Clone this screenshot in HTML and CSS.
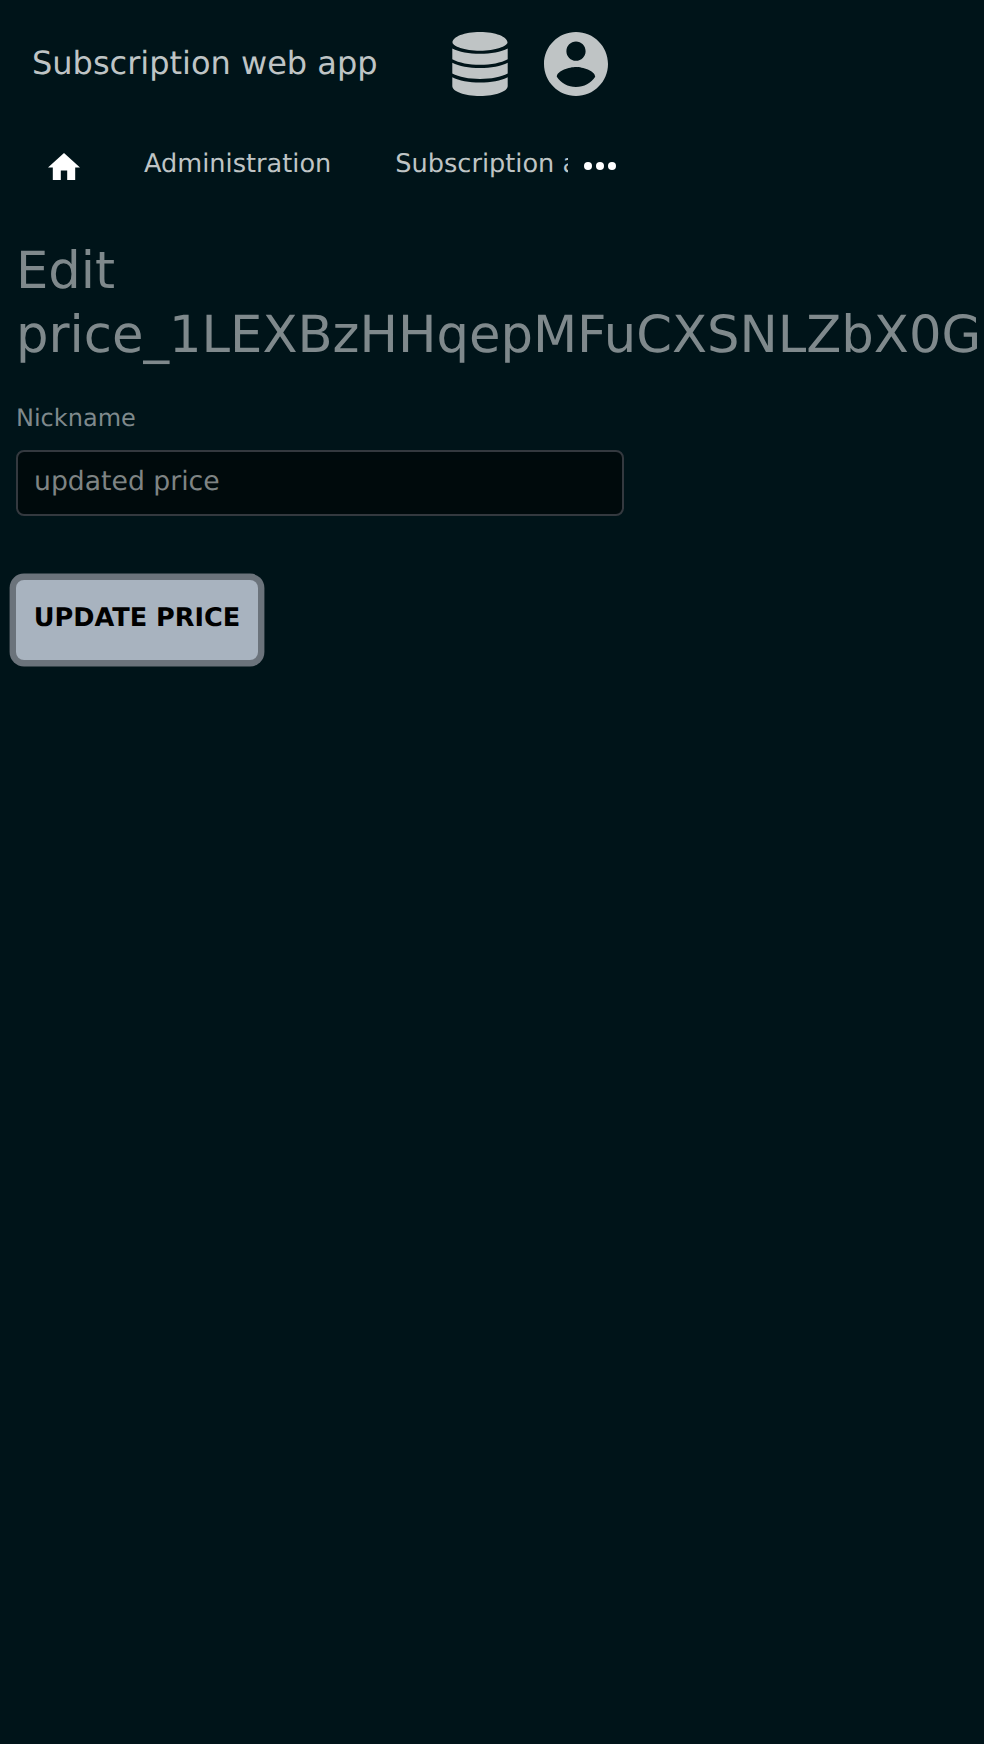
FILE: index.html
```html
<!DOCTYPE html>
<html lang="en">
<head>
<meta charset="utf-8">
<title>Subscription web app</title>
<link rel="stylesheet" href="styles.css">
</head>
<body>
<div class="page">
  <header class="header">
    <span class="brand">Subscription web app</span>
    <div class="actions">
      <svg class="database" viewBox="0 0 56 64"><path d="M28 0C43.500 0 55.500 4.700 55.500 10.500C55.500 14 43.500 18.700 28 18.700S.5 14 .5 10.500C.5 4.700 12.500 0 28 0ZM.3 16.500C7 20 17 21.800 28 21.800S49 20 55.700 16.500V27.300C49 31 39 32.800 28 32.800S7 31 .3 27.300ZM.3 30.800C7 34.300 17 36.100 28 36.100S49 34.300 55.700 30.800V41.600C49 45.200 39 47 28 47S7 45.200 .3 41.600ZM.3 45.200C7 48.700 17 50.500 28 50.500S49 48.700 55.700 45.200V54C55.700 59.500 43.500 64 28 64S.3 59.500 .3 54Z"/></svg>
      <svg class="account" viewBox="2 2 20 20"><path d="M12 2C6.480 2 2 6.480 2 12s4.480 10 10 10 10-4.480 10-10S17.520 2 12 2zm0 3c1.660 0 3 1.340 3 3s-1.340 3-3 3-3-1.340-3-3 1.340-3 3-3zm0 14.200c-2.500 0-4.710-1.280-6-3.220.030-1.990 4-3.080 6-3.080 1.990 0 5.970 1.090 6 3.080-1.290 1.940-3.500 3.220-6 3.220z"/></svg>
    </div>
  </header>
  <nav class="nav">
    <div class="links">
      <a class="home"><svg viewBox="2 3 20 17"><path d="M10 20v-6h4v6h5v-8h3L12 3 2 12h3v8z"/></svg></a>
      <a>Administration</a>
      <a>Subscription administration</a>
    </div>
    <svg class="more" viewBox="0 0 32 8"><circle cx="4" cy="4" r="4"/><circle cx="16" cy="4" r="4"/><circle cx="28" cy="4" r="4"/></svg>
  </nav>
  <main class="content">
    <h1>Edit price_1LEXBzHHqepMFuCXSNLZbX0G</h1>
    <form>
      <label for="nickname">Nickname</label>
      <input id="nickname" type="text" value="updated price">
      <button type="button">UPDATE PRICE</button>
    </form>
  </main>
</div>
</body>
</html>
```
FILE: styles.css
```css
* { box-sizing: border-box; }
html { background: #001419; overflow: hidden; }
body { margin: 0; min-height: 1744px; background: #001419; font-family: "DejaVu Sans", sans-serif; text-rendering: geometricPrecision; }
.page { width: 640px; }
.header { height: 128px; padding: 0 32px; display: flex; align-items: center; justify-content: space-between; color: #bfc4c5; }
.brand { padding-bottom: 2px; font-size: 32px; line-height: 48px; }
.actions { display: flex; align-items: center; gap: 36px; }
.actions svg { height: 64px; fill: #bfc4c5; }
.database { width: 56px; }
.account { width: 64px; }
.nav { height: 72px; display: flex; align-items: center; }
.links { width: 568px; height: 72px; display: flex; align-items: center; overflow: hidden; }
.links a { flex: none; padding: 0 32px; font-size: 25.600px; line-height: 72px; color: #bfc4c5; white-space: nowrap; }
.links .home { padding: 4.800px 32px 0 48px; line-height: 0; }
.home svg { display: block; width: 32px; height: 27.200px; fill: #fff; }
.more { width: 32px; height: 8px; margin: 4px 0 0 16px; fill: #fff; }
.content { padding: 39px 16px 0; color: #7f898c; }
h1 { margin: 0; font-size: 51.200px; line-height: 64px; font-weight: 400; }
form { display: flex; flex-direction: column; align-items: flex-start; }
label { margin-top: 31px; font-size: 24px; line-height: 40px; }
input { width: 608px; height: 66px; margin-top: 12px; padding: 0 16px 4px; border: 2px solid #34393f; border-radius: 8px; background: #000a0c; color: #7f8484; font: 26.667px "DejaVu Sans", sans-serif; text-rendering: inherit; }
button { width: 242px; height: 80px; margin-top: 64px; padding: 0 0 4px; border: 0; border-radius: 8px; background: #a8b3bf; color: #000; box-shadow: 0 0 0 6.400px #6b737b; font: bold 25.600px "DejaVu Sans", sans-serif; text-rendering: inherit; white-space: nowrap; }
```
